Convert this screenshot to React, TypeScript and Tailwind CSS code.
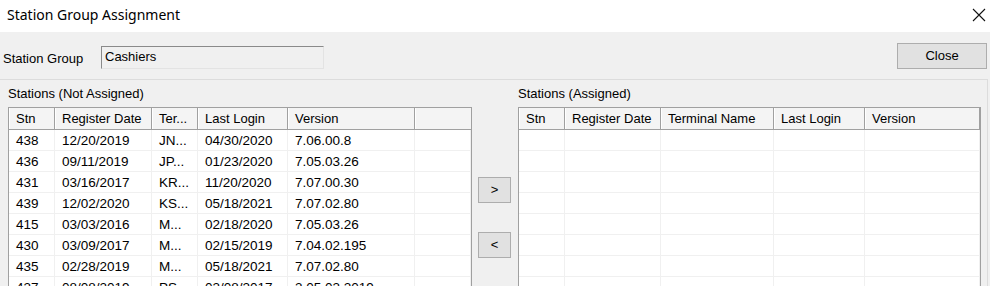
type Col = { label: string; w: number };

const leftCols: Col[] = [
  { label: "Stn", w: 46 },
  { label: "Register Date", w: 97 },
  { label: "Ter...", w: 46 },
  { label: "Last Login", w: 90 },
  { label: "Version", w: 127 },
  { label: "", w: 56 },
];

const rightCols: Col[] = [
  { label: "Stn", w: 46 },
  { label: "Register Date", w: 96 },
  { label: "Terminal Name", w: 113 },
  { label: "Last Login", w: 91 },
  { label: "Version", w: 115 },
];

const stations = [
  ["438", "12/20/2019", "JN...", "04/30/2020", "7.06.00.8", ""],
  ["436", "09/11/2019", "JP...", "01/23/2020", "7.05.03.26", ""],
  ["431", "03/16/2017", "KR...", "11/20/2020", "7.07.00.30", ""],
  ["439", "12/02/2020", "KS...", "05/18/2021", "7.07.02.80", ""],
  ["415", "03/03/2016", "M...", "02/18/2020", "7.05.03.26", ""],
  ["430", "03/09/2017", "M...", "02/15/2019", "7.04.02.195", ""],
  ["435", "02/28/2019", "M...", "05/18/2021", "7.07.02.80", ""],
  ["437", "08/08/2019", "PS...", "03/08/2017", "3.05.03.2019", ""],
];

function Grid({ cols, rows }: { cols: Col[]; rows: string[][] }) {
  const filled = [...rows];
  while (filled.length < 8) filled.push(cols.map(() => ""));

  return (
    <div className="flex-1 overflow-hidden border border-[#a0a0a0] bg-white">
      <div className="flex border-b border-[#a0a0a0] bg-[#f4f4f4]">
        {cols.map((c, i) => (
          <div
            key={i}
            style={{ width: c.w }}
            className={`flex h-[21px] shrink-0 items-center overflow-hidden whitespace-nowrap pl-[7px] pt-[1px] shadow-[inset_1px_0_0_#ffffff] ${
              c.label ? "border-r border-[#a0a0a0]" : ""
            }`}
          >
            {c.label}
          </div>
        ))}
      </div>
      {filled.map((r, ri) => (
        <div key={ri} className="flex border-b border-[#f0f0f0]">
          {cols.map((c, ci) => (
            <div
              key={ci}
              style={{ width: c.w }}
              className="flex h-[20px] shrink-0 items-center overflow-hidden whitespace-nowrap border-r border-[#f0f0f0] pl-[7px] pt-[3px] text-[13.5px]"
            >
              {r[ci]}
            </div>
          ))}
        </div>
      ))}
    </div>
  );
}

export default function App() {
  return (
    <div className="flex h-[286px] w-[990px] flex-col overflow-hidden bg-[#f0f0f0] font-['Liberation_Sans',Arial,sans-serif] text-[13px] text-black">
      {/* title bar */}
      <div className="flex h-[32px] shrink-0 items-center justify-between bg-white pl-[7px] pr-[5px]">
        <span className="pb-[3px] font-['Noto_Sans',sans-serif] text-[14px]">Station Group Assignment</span>
        <svg width="14" height="14" viewBox="0 0 14 14" className="mb-[3px] mr-[-1px]" aria-hidden>
          <path d="M1 1 L13 13 M13 1 L1 13" stroke="#111" strokeWidth="1.1" />
        </svg>
      </div>

      {/* group row */}
      <div className="flex h-[47px] shrink-0 items-start pl-[3px] pr-[3px]">
        <span className="mt-[17px] w-[98px]">Station Group</span>
        <div className="mt-[14px] h-[23px] w-[223px] border border-b-[#e3e3e3] border-l-[#8a8a8a] border-r-[#e3e3e3] border-t-[#8a8a8a] bg-[#f0f0f0] pl-[3px] pt-[2px] leading-[16px]">
          Cashiers
        </div>
        <button
          type="button"
          className="ml-auto mt-[11px] h-[26px] w-[90px] border border-[#adadad] bg-[#e1e1e1]"
        >
          Close
        </button>
      </div>

      {/* stations panel */}
      <div className="mr-[2px] flex flex-1 border-r border-t border-[#dcdcdc] pl-[8px] pr-[6px]">
        <div className="flex w-[464px] flex-col">
          <div className="flex h-[27px] shrink-0 items-center pt-[1px]">Stations (Not Assigned)</div>
          <Grid cols={leftCols} rows={stations} />
        </div>

        <div className="flex w-[46px] flex-col items-center gap-[29px] pr-[1px] pt-[97px]">
          <button type="button" className="h-[26px] w-[33px] border border-[#adadad] bg-[#e1e1e1]">
            &gt;
          </button>
          <button type="button" className="h-[26px] w-[33px] border border-[#adadad] bg-[#e1e1e1]">
            &lt;
          </button>
        </div>

        <div className="flex w-[463px] flex-col">
          <div className="flex h-[27px] shrink-0 items-center pt-[1px]">Stations (Assigned)</div>
          <Grid cols={rightCols} rows={[]} />
        </div>
      </div>
    </div>
  );
}
